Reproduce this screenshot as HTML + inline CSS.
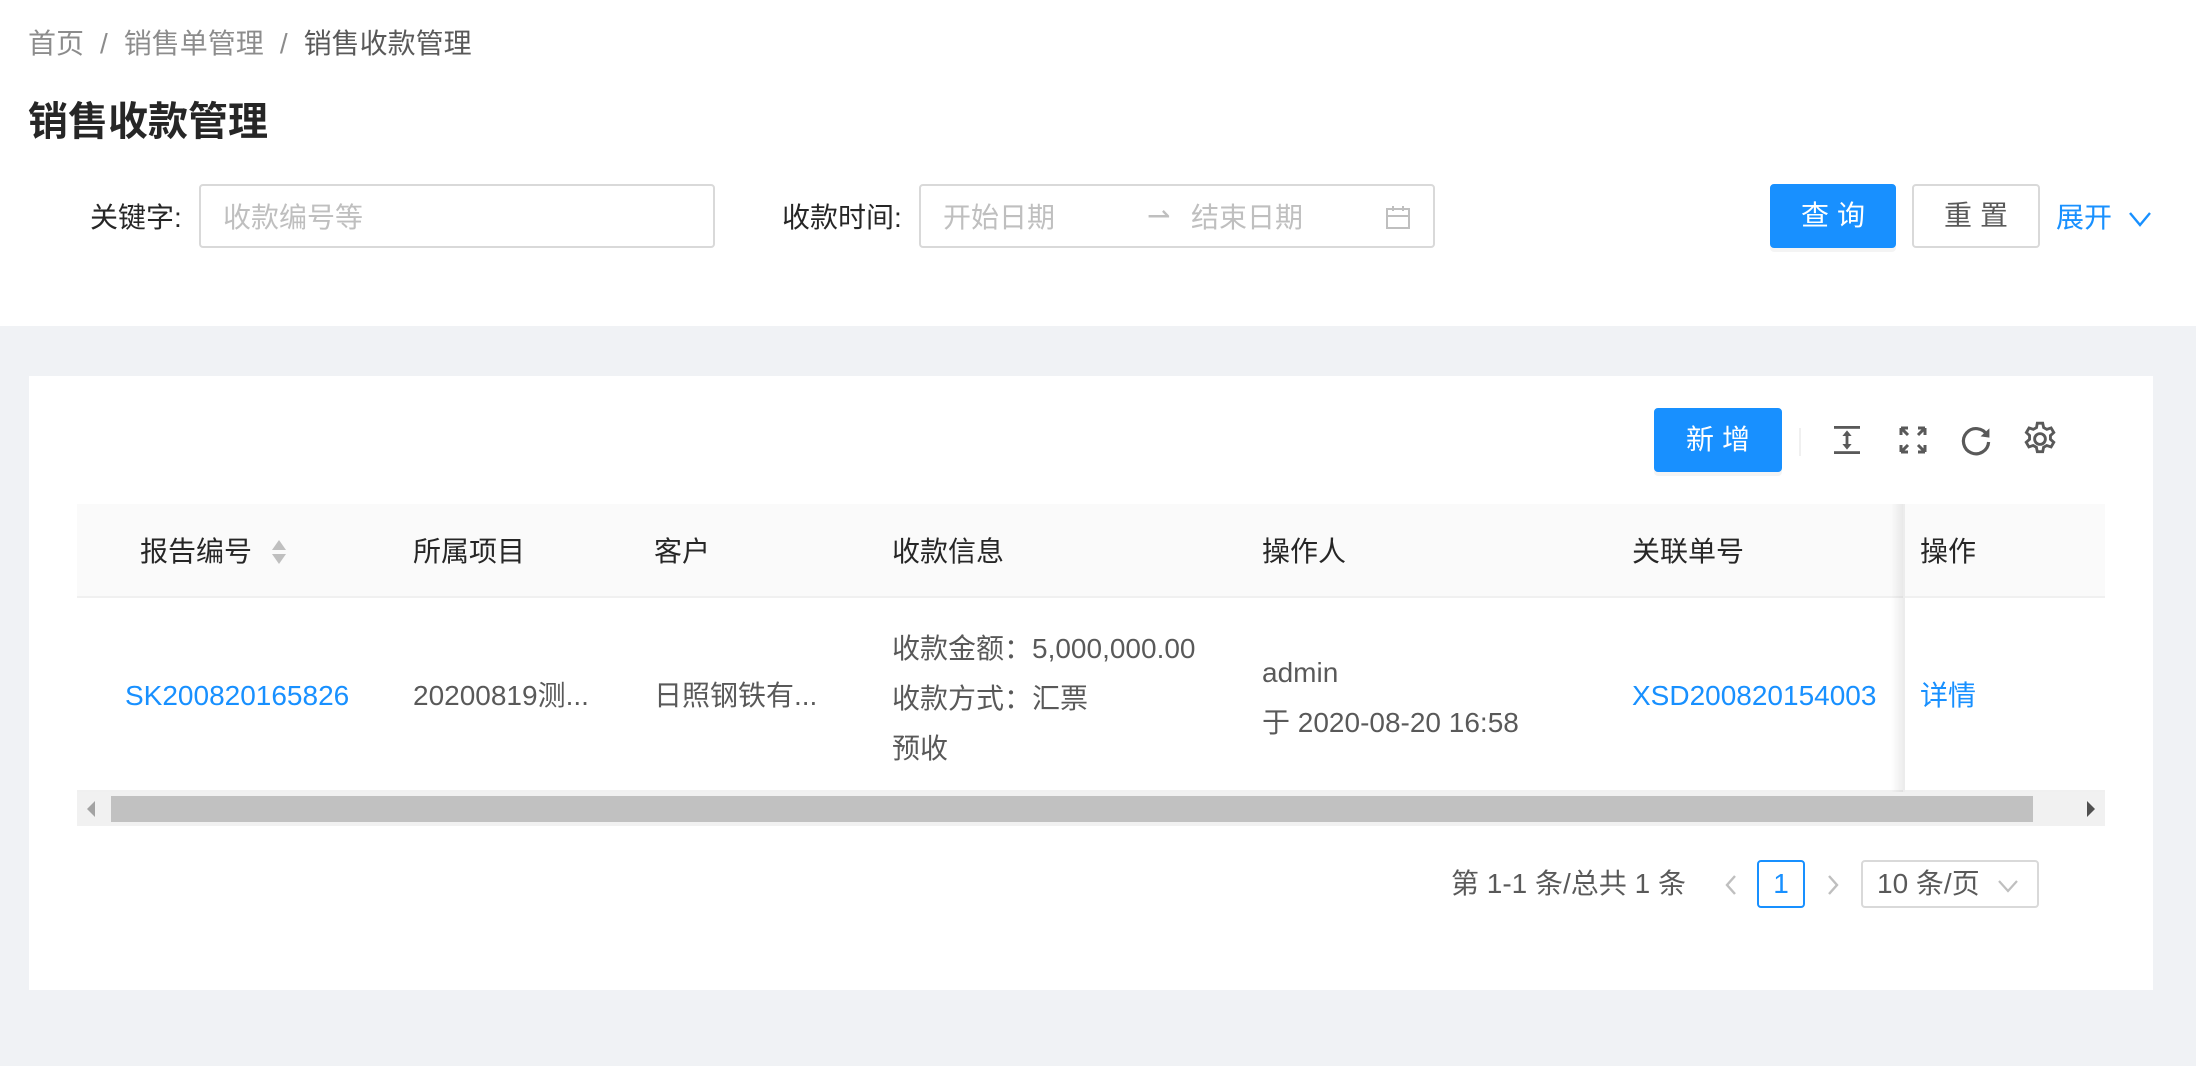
<!DOCTYPE html>
<html><head><meta charset="utf-8">
<style>
*{box-sizing:border-box;margin:0;padding:0}
html,body{width:1098px;height:532.5px;overflow:hidden}
body{zoom:2;background:#f0f2f5;font-family:"Liberation Sans","Noto Sans CJK SC",sans-serif;font-size:14px;color:rgba(0,0,0,.65);position:relative;width:1098px;height:533px}
.a{position:absolute;white-space:nowrap}
.hdr{position:absolute;left:0;top:0;width:1098px;height:163px;background:#fff}
.inp{position:absolute;border:1px solid #d9d9d9;border-radius:2px;background:#fff;height:32px}
.ph{color:#bfbfbf}
.btn{position:absolute;height:32px;border-radius:2px;text-align:center;line-height:30px;font-size:14px;letter-spacing:4px;padding-left:4px}
.blue{background:#1890ff;color:#fff;border:1px solid #1890ff;box-shadow:0 2px 0 rgba(0,0,0,.045)}
.card{position:absolute;left:14.5px;top:188px;width:1062px;height:307px;background:#fff}
.link{color:#1890ff}
</style></head><body>
<div class="hdr">
  <div class="a" style="left:14px;top:12px;line-height:20px;color:rgba(0,0,0,.45)">首页<span style="margin:0 8px">/</span>销售单管理<span style="margin:0 8px">/</span><span style="color:rgba(0,0,0,.65)">销售收款管理</span></div>
  <div class="a" style="left:14px;top:47px;font-size:20px;font-weight:bold;color:rgba(0,0,0,.85);line-height:28px">销售收款管理</div>

  <div class="a" style="left:45px;top:98px;line-height:22px;color:rgba(0,0,0,.85)">关键字:</div>
  <div class="inp" style="left:99.5px;top:92px;width:258px"><span class="a ph" style="left:11px;top:5px;line-height:22px">收款编号等</span></div>

  <div class="a" style="left:391px;top:98px;line-height:22px;color:rgba(0,0,0,.85)">收款时间:</div>
  <div class="inp" style="left:459.5px;top:92px;width:258px">
    <span class="a ph" style="left:11px;top:5px;line-height:22px">开始日期</span>
    <span class="a ph" style="left:113px;top:4px;line-height:22px">⇀</span>
    <span class="a ph" style="left:135px;top:5px;line-height:22px">结束日期</span>
    <svg class="a" style="left:232px;top:9px" width="13" height="13" viewBox="0 0 13 13" fill="none" stroke="#bfbfbf" stroke-width="1"><rect x="1" y="2.5" width="11" height="9.5"/><line x1="1" y1="6" x2="12" y2="6"/><line x1="4" y1="1" x2="4" y2="3.5"/><line x1="9" y1="1" x2="9" y2="3.5"/></svg>
  </div>

  <div class="btn blue" style="left:885px;top:92px;width:63px">查询</div>
  <div class="btn" style="left:956px;top:92px;width:64px;border:1px solid #d9d9d9;background:#fff;color:rgba(0,0,0,.65)">重置</div>
  <div class="a link" style="left:1028px;top:98px;line-height:22px">展开<svg style="margin-left:8px;vertical-align:-1px" width="12" height="10" viewBox="0 0 12 10" fill="none" stroke="#1890ff" stroke-width="1.2"><polyline points="1,2 6,8 11,2"/></svg></div>
</div>

<div class="card">
  <div class="btn blue" style="left:812.5px;top:16px;width:64px;height:32px;line-height:30px">新增</div>
  <div class="a" style="left:885px;top:26px;width:1px;height:14px;background:#f0f0f0"></div>
  <svg class="a" style="left:901px;top:24px" width="16" height="16" viewBox="0 0 16 16" fill="#595959"><rect x="1.5" y="1" width="13" height="1.4"/><rect x="1.5" y="13.6" width="13" height="1.4"/><rect x="7.3" y="4" width="1.4" height="8"/><polygon points="8,3.2 10.3,6 5.7,6"/><polygon points="8,12.8 10.3,10 5.7,10"/></svg>
  <svg class="a" style="left:934px;top:24px" width="16" height="16" viewBox="0 0 16 16" fill="none" stroke="#595959" stroke-width="1.5"><path d="M2 2 L5.5 5.5 M2 2 v3.5 M2 2 h3.5"/><path d="M14 2 L10.5 5.5 M14 2 v3.5 M14 2 h-3.5"/><path d="M2 14 L5.5 10.5 M2 14 v-3.5 M2 14 h3.5"/><path d="M14 14 L10.5 10.5 M14 14 v-3.5 M14 14 h-3.5"/></svg>
  <svg class="a" style="left:965px;top:24px" width="17" height="17" viewBox="0 0 17 17" fill="none" stroke="#595959" stroke-width="1.6"><path d="M14 5.5 A6.3 6.3 0 1 0 14.8 9"/><polygon points="15.2,2.2 15.2,6.8 10.8,6.2" fill="#595959" stroke="none"/></svg>
  <svg class="a" style="left:996px;top:22px" width="19" height="19" viewBox="0 0 24 24" fill="none" stroke="#595959" stroke-width="1.8"><path d="M10.3 2h3.4l.6 2.8 2 1.1 2.7-.9 1.7 2.9-2.1 1.9v2.4l2.1 1.9-1.7 2.9-2.7-.9-2 1.1-.6 2.8h-3.4l-.6-2.8-2-1.1-2.7.9-1.7-2.9 2.1-1.9v-2.4L3.4 7.9l1.7-2.9 2.7.9 2-1.1z"/><circle cx="12" cy="12" r="3.4"/></svg>

  <div class="a" style="left:24px;top:64px;width:1014px;height:47px;background:#fafafa;border-bottom:1px solid #f0f0f0"></div>
  <div class="a" style="left:24px;top:111px;width:1014px;height:97px;background:#fff;border-bottom:1px solid #f0f0f0"></div>
  <div class="a" style="left:931px;top:64px;width:6px;height:144px;background:linear-gradient(to left,rgba(0,0,0,.07),rgba(0,0,0,0))"></div>
  <div class="a" style="left:937px;top:64px;width:1px;height:144px;background:#ececec"></div>

  <div class="a" style="left:55.5px;top:77px;line-height:22px;color:rgba(0,0,0,.85)">报告编号</div>
  <svg class="a" style="left:121px;top:81px" width="8" height="14" viewBox="0 0 8 14" fill="#bfbfbf"><polygon points="4,1 7.5,6 0.5,6"/><polygon points="4,13 7.5,8 0.5,8"/></svg>
  <div class="a" style="left:192px;top:77px;line-height:22px;color:rgba(0,0,0,.85)">所属项目</div>
  <div class="a" style="left:312.5px;top:77px;line-height:22px;color:rgba(0,0,0,.85)">客户</div>
  <div class="a" style="left:431.5px;top:77px;line-height:22px;color:rgba(0,0,0,.85)">收款信息</div>
  <div class="a" style="left:616.5px;top:77px;line-height:22px;color:rgba(0,0,0,.85)">操作人</div>
  <div class="a" style="left:801.5px;top:77px;line-height:22px;color:rgba(0,0,0,.85)">关联单号</div>
  <div class="a" style="left:945.5px;top:77px;line-height:22px;color:rgba(0,0,0,.85)">操作</div>

  <div class="a link" style="left:48px;top:149px;line-height:22px">SK200820165826</div>
  <div class="a" style="left:192px;top:149px;line-height:22px">20200819测...</div>
  <div class="a" style="left:312.5px;top:149px;line-height:22px">日照钢铁有...</div>
  <div class="a" style="left:431.5px;top:124px;line-height:25px">收款金额：5,000,000.00<br>收款方式：汇票<br>预收</div>
  <div class="a" style="left:616.5px;top:136px;line-height:25px">admin<br>于 2020-08-20 16:58</div>
  <div class="a link" style="left:801.5px;top:149px;line-height:22px">XSD200820154003</div>
  <div class="a link" style="left:945.5px;top:149px;line-height:22px">详情</div>

  <div class="a" style="left:24px;top:208px;width:1014px;height:17px;background:#f1f1f1"></div>
  <div class="a" style="left:41px;top:210px;width:961px;height:13px;background:#c1c1c1"></div>
  <svg class="a" style="left:28px;top:212px" width="6" height="9" viewBox="0 0 6 9" fill="#a3a3a3"><polygon points="5,0.5 1,4.5 5,8.5"/></svg>
  <svg class="a" style="left:1028px;top:212px" width="6" height="9" viewBox="0 0 6 9" fill="#505050"><polygon points="1,0.5 5,4.5 1,8.5"/></svg>

  <div class="a" style="left:711px;top:243px;line-height:22px">第 1-1 条/总共 1 条</div>
  <svg class="a" style="left:847px;top:249px" width="8" height="11" viewBox="0 0 8 11" fill="none" stroke="#bfbfbf" stroke-width="1.2"><polyline points="6,1 2,5.5 6,10"/></svg>
  <div class="a link" style="left:864px;top:242px;width:24px;height:24px;border:1px solid #1890ff;border-radius:2px;text-align:center;line-height:22px">1</div>
  <svg class="a" style="left:898px;top:249px" width="8" height="11" viewBox="0 0 8 11" fill="none" stroke="#bfbfbf" stroke-width="1.2"><polyline points="2,1 6,5.5 2,10"/></svg>
  <div class="a" style="left:916px;top:242px;width:89px;height:24px;border:1px solid #d9d9d9;border-radius:2px;line-height:22px;padding-left:7px">10 条/页<svg style="position:absolute;left:67px;top:8px" width="11" height="8" viewBox="0 0 11 8" fill="none" stroke="#bfbfbf" stroke-width="1.1"><polyline points="1,1.5 5.5,6.5 10,1.5"/></svg></div>
</div>
</body></html>
